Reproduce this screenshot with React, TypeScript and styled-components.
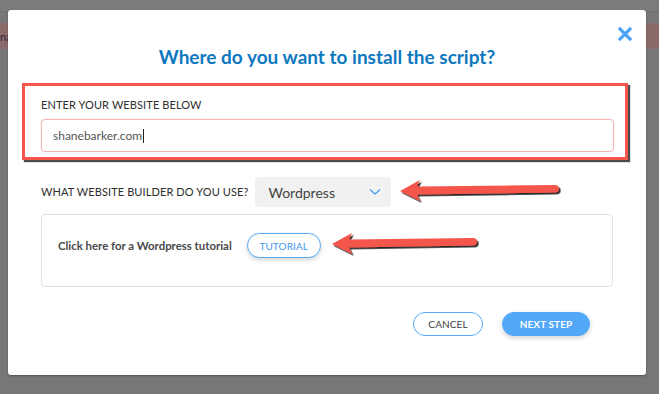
import styled, { createGlobalStyle } from "styled-components";

const GlobalStyle = createGlobalStyle`
  html, body {
    margin: 0;
    padding: 0;
    background: #777777;
    font-family: Lato, "Open Sans", Arial, sans-serif;
  }
  * { box-sizing: border-box; }
`;

export default function App() {
  return (
    <>
      <GlobalStyle />
      <Page>
        <TopBar />
        <BackRow>
          <span>na</span>
        </BackRow>

        <Modal role="dialog">
          <Close aria-label="Close">
            <svg width="14" height="14" viewBox="0 0 14 14">
              <path d="M2 2 L12 12 M12 2 L2 12" stroke="#4fa3f7" strokeWidth="3.2" strokeLinecap="square" />
            </svg>
          </Close>

          <Title>Where do you want to install the script?</Title>

          <Highlight>
            <Label>ENTER YOUR WEBSITE BELOW</Label>
            <UrlField>
              shanebarker.com<Caret />
            </UrlField>
          </Highlight>

          <BuilderRow>
            <Label>WHAT WEBSITE BUILDER DO YOU USE?</Label>
            <Select>
              <span>Wordpress</span>
              <svg width="12" height="8" viewBox="0 0 12 8">
                <path d="M1 1.5 L6 6 L11 1.5" fill="none" stroke="#4fa3f7" strokeWidth="1.4" />
              </svg>
            </Select>
          </BuilderRow>

          <TutorialBox>
            <TutorialText>Click here for a Wordpress tutorial</TutorialText>
            <PillButton $variant="outline" $small>TUTORIAL</PillButton>
          </TutorialBox>

          <Footer>
            <PillButton $variant="ghost">CANCEL</PillButton>
            <PillButton $variant="primary">NEXT STEP</PillButton>
          </Footer>

          <Arrow style={{ left: 390, top: 158 }} width={161} />
          <Arrow style={{ left: 322, top: 211 }} width={147} />
        </Modal>
      </Page>
    </>
  );
}

function Arrow({ width, style }: { width: number; style?: React.CSSProperties }) {
  const w = width;
  return (
    <ArrowSvg width={w + 6} height={36} viewBox={`0 0 ${w + 6} 36`} style={style}>
      <defs>
        <filter id="arrowShadow" x="-10%" y="-40%" width="130%" height="200%">
          <feDropShadow dx="1.6" dy="1.8" stdDeviation="0.6" floodColor="#000" floodOpacity="0.85" />
        </filter>
      </defs>
      <g filter="url(#arrowShadow)">
        <path
          d={`M2 23 L22 12 L19 18.5 L${w - 4} 17 Q${w} 17 ${w} 20.8 Q${w} 24.6 ${w - 4} 24.6 L19 26.5 L22 33 Z`}
          fill="#f5574b"
        />
      </g>
    </ArrowSvg>
  );
}

const Page = styled.div`
  position: relative;
  width: 659px;
  height: 394px;
  overflow: hidden;
  background: #777777;
`;

const TopBar = styled.div`
  height: 12px;
  background: #7b7b7b;
  border-bottom: 1px solid #6e6e6e;
`;

const BackRow = styled.div`
  margin-top: 11px;
  height: 26px;
  background: #8a6b6a;
  display: flex;
  align-items: center;
  font-size: 11px;
  color: #2a2a3a;

  span {
    margin-left: 0;
  }
`;

const Modal = styled.div`
  position: absolute;
  left: 8px;
  top: 10px;
  width: 638px;
  height: 365px;
  background: #ffffff;
  border-radius: 3px;
  padding: 35px 33px 0;
  box-shadow: 0 1px 2px rgba(0, 0, 0, 0.3);
`;

const Close = styled.button`
  position: absolute;
  top: 14px;
  right: 11px;
  width: 20px;
  height: 20px;
  padding: 0;
  border: none;
  background: none;
  display: flex;
  align-items: center;
  justify-content: center;
  cursor: pointer;
`;

const Title = styled.h2`
  margin: 0 0 14px;
  text-align: center;
  font-size: 19px;
  line-height: 24px;
  font-weight: 700;
  color: #0e78bf;
`;

const Highlight = styled.div`
  margin: 0 -15px 0 -19px;
  border: 3px solid #f5554a;
  padding: 12px 11px 5px 16px;
  box-shadow: 2px 2px 1px rgba(0, 0, 0, 0.7);
`;

const Label = styled.div`
  font-size: 11px;
  line-height: 14px;
  color: #2e2e2e;
  letter-spacing: 0.1px;
`;

const UrlField = styled.div`
  margin-top: 7px;
  height: 33px;
  border: 1px solid #f7b3b3;
  border-radius: 4px;
  box-shadow: 0 0 1px rgba(245, 85, 74, 0.4);
  display: flex;
  align-items: center;
  padding-left: 11px;
  font-size: 12px;
  color: #555555;
`;

const Caret = styled.span`
  display: inline-block;
  width: 1px;
  height: 14px;
  margin-left: 1px;
  background: #222;
`;

const BuilderRow = styled.div`
  margin-top: 17px;
  display: flex;
  align-items: center;
  gap: 7px;
`;

const Select = styled.div`
  width: 136px;
  height: 30px;
  border-radius: 4px;
  background: #f1f1f1;
  display: flex;
  align-items: center;
  justify-content: space-between;
  padding: 0 10px 0 13px;
  font-size: 14px;
  color: #444444;
`;

const TutorialBox = styled.div`
  margin-top: 7px;
  height: 73px;
  border: 1px solid #e2e2e2;
  border-radius: 4px;
  display: flex;
  align-items: flex-start;
  gap: 15px;
  padding: 18px 16px 0;
`;

const TutorialText = styled.div`
  height: 25px;
  display: flex;
  align-items: center;
  font-size: 11.4px;
  font-weight: 700;
  color: #4a4a4a;
`;

const PillButton = styled.button<{ $variant: "outline" | "ghost" | "primary"; $small?: boolean }>`
  height: ${({ $small }) => ($small ? "25px" : "24px")};
  padding: 0;
  width: ${({ $small, $variant }) => ($small ? "74px" : $variant === "primary" ? "88px" : "70px")};
  border-radius: 13px;
  font-family: Lato, Arial, sans-serif;
  font-size: 10px;
  letter-spacing: 0.1px;
  cursor: pointer;
  border: 1px solid ${({ $variant }) => ($variant === "primary" ? "#53a8fa" : "#5aabf5")};
  background: ${({ $variant }) => ($variant === "primary" ? "#53a8fa" : "#ffffff")};
  color: ${({ $variant }) =>
    $variant === "primary" ? "#ffffff" : $variant === "outline" ? "#3f98ea" : "#3d3d3d"};
  font-weight: ${({ $variant }) => ($variant === "primary" ? 700 : 400)};
  box-shadow: ${({ $variant }) =>
    $variant === "ghost" ? "none" : "0 2px 5px rgba(0, 0, 0, 0.18)"};
`;

const Footer = styled.div`
  margin-top: 25px;
  display: flex;
  justify-content: flex-end;
  gap: 19px;
  padding-right: 23px;
`;

const ArrowSvg = styled.svg`
  position: absolute;
  overflow: visible;
  pointer-events: none;
`;
